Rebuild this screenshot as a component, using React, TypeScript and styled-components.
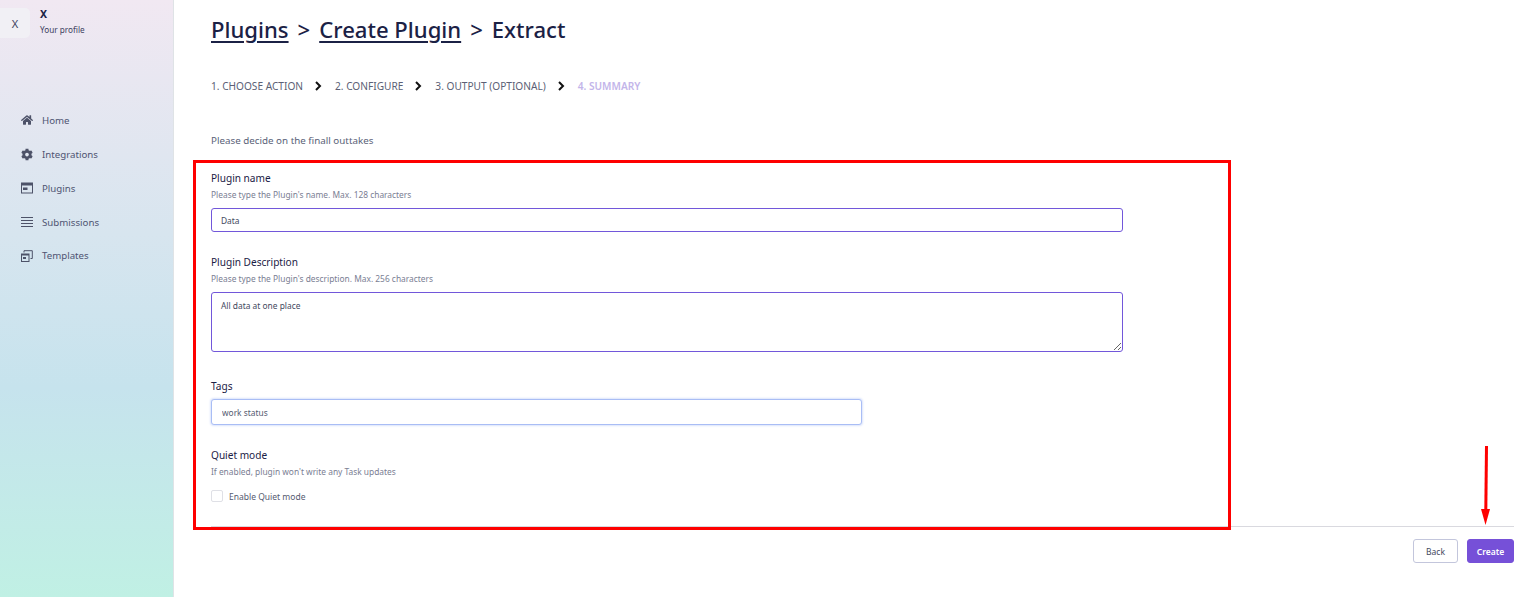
import React from "react";
import styled, { createGlobalStyle } from "styled-components";
import { FaHome, FaCog } from "react-icons/fa";

const Global = createGlobalStyle`
  html, body { margin: 0; padding: 0; background: #fff; }
  body { font-family: "Noto Sans", "Open Sans", sans-serif; color: #1b2145; overflow: hidden; }
  * { box-sizing: border-box; }
`;

const Page = styled.div`
  position: relative;
  display: flex;
  width: 1535px;
  height: 597px;
  overflow: hidden;
`;

const Sidebar = styled.aside`
  flex: 0 0 174px;
  height: 597px;
  background: linear-gradient(180deg, #f1e8f2 0%, #c6e3ed 65%, #c0f0e4 100%);
  border-right: 1px solid #dfe3e6;
`;

const Profile = styled.div`
  display: flex;
  gap: 10px;
  height: 92px;
  align-items: flex-start;
  padding-top: 8px;
`;

const Avatar = styled.div`
  width: 30px;
  height: 30px;
  background: #f1f0f5;
  border-radius: 0 5px 5px 0;
  display: flex;
  align-items: center;
  justify-content: center;
  font-size: 11px;
  color: #3c4160;
`;

const ProfileText = styled.div`
  display: flex;
  flex-direction: column;
`;

const ProfileName = styled.span`
  font-size: 10.5px;
  line-height: 12px;
  font-weight: 700;
  color: #1b2145;
`;

const ProfileSub = styled.span`
  font-size: 8.2px;
  line-height: 14px;
  margin-top: 3px;
  color: #3c4160;
`;

const Nav = styled.nav`
  display: flex;
  flex-direction: column;
  padding: 11px 0 0 21px;
`;

const NavItem = styled.div<{ $h?: number }>`
  display: flex;
  align-items: center;
  gap: 9px;
  height: ${(p) => p.$h ?? 34}px;
  font-size: 9.7px;
  color: #4f5472;
`;

const IconBox = styled.span`
  width: 12px;
  height: 13px;
  display: inline-flex;
  align-items: center;
  color: #4d5268;
`;

const Main = styled.main`
  flex: 1;
  display: flex;
  flex-direction: column;
  padding: 0 21px 0 37px;
`;

const Title = styled.h1`
  margin: 12px 0 0;
  font-size: 22.1px;
  line-height: 34px;
  font-weight: 500;
  color: #1b2145;
  display: flex;
  gap: 9px;
`;

const Crumb = styled.a`
  color: inherit;
  text-decoration: underline;
  text-decoration-thickness: 2px;
  text-underline-offset: 3px;
`;

const Steps = styled.div`
  display: flex;
  align-items: center;
  margin-top: 32px;
  height: 16px;
  font-size: 10.15px;
`;

const Step = styled.span<{ $active?: boolean }>`
  color: ${(p) => (p.$active ? "#c3b5ea" : "#5b5f75")};
  font-weight: ${(p) => (p.$active ? 600 : 400)};
`;

const Chevron = styled.svg`
  width: 7px;
  height: 10px;
  margin: 0 13px 0 12px;
  fill: none;
  stroke: #111;
  stroke-width: 2;
`;

const Intro = styled.p`
  margin: 39px 0 0;
  font-size: 9.8px;
  line-height: 16px;
  color: #5a5f78;
`;

const Field = styled.div<{ $top: number }>`
  display: flex;
  flex-direction: column;
  margin-top: ${(p) => p.$top}px;
`;

const Label = styled.label`
  font-size: 10.1px;
  line-height: 16px;
  color: #1b2145;
`;

const Hint = styled.span`
  font-size: 8.4px;
  line-height: 14px;
  margin-top: 2px;
  color: #7a7e93;
`;

const TextInput = styled.input`
  width: 912px;
  height: 24px;
  margin-top: 6px;
  padding: 0 9px;
  border: 1px solid #7257da;
  border-radius: 3px;
  font: 8.4px "Noto Sans", sans-serif;
  color: #444960;
  outline: none;
`;

const TextArea = styled.textarea`
  display: block;
  width: 912px;
  height: 60px;
  margin-top: 6px;
  padding: 7px 9px;
  border: 1px solid #7257da;
  border-radius: 3px;
  font: 8.4px/12px "Noto Sans", sans-serif;
  color: #444960;
  outline: none;
`;

const TagInput = styled.input`
  width: 651px;
  height: 26px;
  margin-top: 5px;
  padding: 0 10px;
  border: 1px solid #a9bdf5;
  border-radius: 3px;
  box-shadow: 0 0 2px 1px #dbe4fb;
  font: 8.4px "Noto Sans", sans-serif;
  color: #555a70;
  outline: none;
`;

const CheckRow = styled.div`
  display: flex;
  align-items: center;
  gap: 6px;
  margin-top: 11px;
  font-size: 8.5px;
  color: #555a70;
`;

const CheckBox = styled.span`
  width: 12px;
  height: 12px;
  border: 1px solid #dfe0e6;
  border-radius: 2px;
  background: #fff;
`;

const Footer = styled.div`
  margin-top: 24px;
  border-top: 1px solid #d9d9df;
  padding-top: 12px;
  display: flex;
  justify-content: flex-end;
  gap: 9px;
`;

const Button = styled.button<{ $primary?: boolean }>`
  height: 24px;
  width: ${(p) => (p.$primary ? 47 : 45)}px;
  padding: 0;
  border-radius: 3px;
  border: 1px solid ${(p) => (p.$primary ? "#7650d8" : "#c3c6dc")};
  background: ${(p) => (p.$primary ? "#7650d8" : "#fff")};
  color: ${(p) => (p.$primary ? "#fff" : "#444960")};
  font: ${(p) => (p.$primary ? 600 : 400)} 8.5px "Noto Sans", sans-serif;
`;

const Highlight = styled.div`
  position: absolute;
  left: 193px;
  top: 160px;
  width: 1038px;
  height: 370px;
  border: 3px solid #fe0000;
  pointer-events: none;
`;

const Arrow = styled.svg`
  position: absolute;
  left: 1478px;
  top: 445px;
  width: 14px;
  height: 82px;
`;

const Plugins = () => (
  <svg viewBox="0 0 12 12" width="12" height="12">
    <path fill="currentColor" fillRule="evenodd" d="M0 .5h12v11H0zM1 3.5v7h10v-7zM2 5.5h4.5V8H2z" />
  </svg>
);

const Lines = () => (
  <svg viewBox="0 0 12 12" width="12" height="12">
    <path stroke="currentColor" strokeWidth="1" d="M0 1.5h12M0 4.5h12M0 7.5h12M0 10.5h12" />
  </svg>
);

const Copies = () => (
  <svg viewBox="0 0 12 12" width="12" height="12">
    <path fill="currentColor" fillRule="evenodd" d="M0 3.5h8.5V12H0zM1 5.5V11h6.5V5.5zM2 7h3v2H2z" />
    <path fill="none" stroke="currentColor" d="M3 2.5V.7h8.3V8.5H9.5" />
  </svg>
);

export default function App() {
  return (
    <Page>
      <Global />
      <Sidebar>
        <Profile>
          <Avatar>X</Avatar>
          <ProfileText>
            <ProfileName>X</ProfileName>
            <ProfileSub>Your profile</ProfileSub>
          </ProfileText>
        </Profile>
        <Nav>
          <NavItem><IconBox><FaHome size={14} /></IconBox>Home</NavItem>
          <NavItem><IconBox><FaCog size={13} /></IconBox>Integrations</NavItem>
          <NavItem><IconBox><Plugins /></IconBox>Plugins</NavItem>
          <NavItem><IconBox><Lines /></IconBox>Submissions</NavItem>
          <NavItem $h={33}><IconBox><Copies /></IconBox>Templates</NavItem>
        </Nav>
      </Sidebar>
      <Main>
        <Title>
          <Crumb>Plugins</Crumb><span>&gt;</span><Crumb>Create Plugin</Crumb><span>&gt;</span><span>Extract</span>
        </Title>
        <Steps>
          <Step>1. CHOOSE ACTION</Step>
          <Chevron viewBox="0 0 7 10"><path d="M1 1l4 4-4 4" /></Chevron>
          <Step>2. CONFIGURE</Step>
          <Chevron viewBox="0 0 7 10"><path d="M1 1l4 4-4 4" /></Chevron>
          <Step>3. OUTPUT (OPTIONAL)</Step>
          <Chevron viewBox="0 0 7 10"><path d="M1 1l4 4-4 4" /></Chevron>
          <Step $active>4. SUMMARY</Step>
        </Steps>
        <Intro>Please decide on the finall outtakes</Intro>
        <Field $top={21}>
          <Label>Plugin name</Label>
          <Hint>Please type the Plugin's name. Max. 128 characters</Hint>
          <TextInput readOnly value="Data" />
        </Field>
        <Field $top={22}>
          <Label>Plugin Description</Label>
          <Hint>Please type the Plugin's description. Max. 256 characters</Hint>
          <TextArea readOnly value="All data at one place" />
        </Field>
        <Field $top={26}>
          <Label>Tags</Label>
          <TagInput readOnly value="work status" />
        </Field>
        <Field $top={22}>
          <Label>Quiet mode</Label>
          <Hint>If enabled, plugin won't write any Task updates</Hint>
          <CheckRow><CheckBox />Enable Quiet mode</CheckRow>
        </Field>
        <Footer>
          <Button>Back</Button>
          <Button $primary>Create</Button>
        </Footer>
      </Main>
      <Highlight />
      <Arrow viewBox="0 0 14 82">
        <path d="M8.5 1L7.8 66" stroke="#fe0000" strokeWidth="3" fill="none" />
        <path d="M3 64h9l-4.5 16z" fill="#fe0000" />
      </Arrow>
    </Page>
  );
}
